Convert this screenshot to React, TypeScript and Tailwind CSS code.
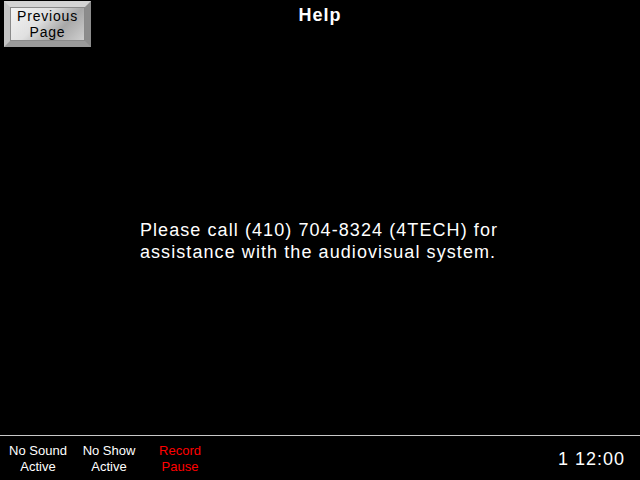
const App = () => {
  return (
    <div className="w-[640px] h-[480px] bg-black text-white flex flex-col font-['Liberation_Sans',Arial,sans-serif] overflow-hidden">
      <div className="h-[435px] flex flex-col">
        <div className="flex items-start h-[48px] relative">
          <button className="ml-[4px] mt-[1px] w-[87px] h-[46px] border-[6px] border-t-[#d4d4d4] border-l-[#c4c4c4] border-r-[#8c8c8c] border-b-[#9a9a9a] bg-[#aaa]">
            <div className="w-full h-full border-[1px] border-[#8a8a8a] bg-[linear-gradient(135deg,#f4f4f4_0%,#e0e0e0_40%,#a8a8a8_68%,#cfcfcf_100%)] flex flex-col items-center justify-center text-black text-[14px] leading-[16px] tracking-[0.8px]">
              <span>Previous</span>
              <span>Page</span>
            </div>
          </button>
          <div className="absolute left-0 right-0 top-[4px] text-center font-bold text-[18px] leading-[22px] tracking-[1px] pointer-events-none">
            Help
          </div>
        </div>
        <div className="flex-1 flex items-center justify-center">
          <p className="text-[18px] leading-[22px] tracking-[1.08px] mt-[-2px] mr-[2px]">
            Please call (410) 704-8324 (4TECH) for
            <br />
            assistance with the audiovisual system.
          </p>
        </div>
      </div>
      <div className="h-px bg-[#c8c8c8]" />
      <div className="flex-1 flex items-center text-[13px] leading-[16px] pt-px">
        <div className="w-[76px] text-center">
          No Sound
          <br />
          Active
        </div>
        <div className="w-[66px] text-center">
          No Show
          <br />
          Active
        </div>
        <div className="w-[76px] text-center text-[#ff0000]">
          Record
          <br />
          Pause
        </div>
        <div className="ml-auto mr-[15px] text-[18px] leading-[22px] tracking-[1px]">1 12:00</div>
      </div>
    </div>
  );
};

export default App;
